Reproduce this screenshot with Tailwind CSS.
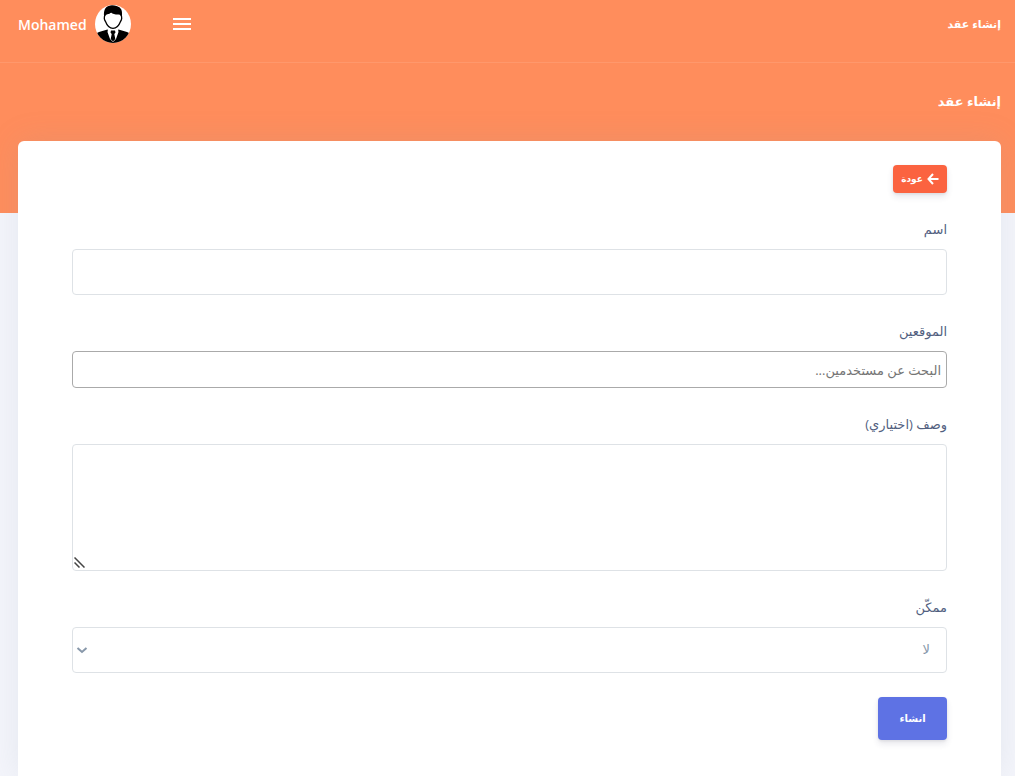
<!DOCTYPE html>
<html lang="ar" dir="rtl">
<head>
  <meta charset="UTF-8" />
  <title>إنشاء عقد</title>
  <meta name="viewport" content="width=device-width, initial-scale=1.0" />
  <script src="https://cdn.jsdelivr.net/npm/@tailwindcss/browser@4"></script>
</head>
<body class="flex min-h-screen flex-col bg-[#f4f5fb] font-['Open_Sans','DejaVu_Sans',sans-serif] text-[#525f7f]">
  <!-- Header -->
  <header class="h-[213px] bg-[#ff8d5c] text-white">
    <nav class="flex h-[63px] items-center justify-between border-b border-white/10 pr-[14px] pl-[18px] pb-3.5">
      <h6 class="text-[11px] font-bold">إنشاء عقد</h6>
      <div class="flex items-center">
        <button type="button" aria-label="القائمة" class="ml-[42px] flex w-[18px] flex-col gap-[3px]">
          <span class="h-0.5 w-full bg-white"></span>
          <span class="h-0.5 w-full bg-white"></span>
          <span class="h-0.5 w-full bg-white"></span>
        </button>
        <a href="#" class="flex items-center gap-2">
          <svg class="h-[38px] w-9" viewBox="0 0 36 38" aria-hidden="true">
            <defs><clipPath id="avatar"><ellipse cx="18" cy="19" rx="18" ry="19" /></clipPath></defs>
            <g clip-path="url(#avatar)">
              <rect width="36" height="38" fill="#fff" />
              <path d="M0 29 4 27 12.500 24.500 18 29 23.500 24.500 32 27 36 29V38H0Z" fill="#000" />
              <path d="M13 24 18 27 23 24 23.500 27 21 34 18 37 15 34 12.500 27Z" fill="#fff" />
              <path d="M16 25.500h4l.5 2-1.200 1.500 1 5-2.300 2.500-2.300-2.500 1-5-1.200-1.500Z" fill="#000" />
              <path d="M10 9.500C9 12 9 14.500 10.500 16.500 12 20.500 15 23.300 18 23.300S24 20.500 25.500 16.500C27 14.500 27 12 26 9.500L18 6Z" fill="#fff" stroke="#000" stroke-width="1.300" />
              <path d="M9.300 13C8 6 10 1.500 15 .5 18-.3 24 .6 26 4c1.500 2.500 1 6 .7 9L25 9.500C21 9.800 18 9.300 16 7.500 14.500 9 12.500 9 11 9.500Z" fill="#000" />
            </g>
          </svg>
          <span class="pt-0.5 text-sm font-semibold">Mohamed</span>
        </a>
      </div>
    </nav>
    <h2 class="pt-[26px] pr-[14px] text-[13px] leading-6 font-bold">إنشاء عقد</h2>
  </header>

  <!-- Form card -->
  <main class="-mt-[72px] flex flex-1 flex-col pr-[14px] pl-[18px]">
    <div class="flex-1 rounded-t-md bg-white px-[54px] pt-6 pb-6 shadow-[0_0_32px_0_rgba(136,152,170,0.15)]">
      <a href="#" class="flex h-7 w-[54px] items-center justify-center gap-1 rounded bg-[#fb6340] text-[9px] font-bold text-white shadow-[0_4px_6px_rgba(50,50,93,0.11),0_1px_3px_rgba(0,0,0,0.08)]">
        <svg class="size-3" viewBox="0 0 12 12" fill="none" stroke="currentColor" stroke-width="2" aria-hidden="true"><path d="M6 1 1.500 6 6 11M1.500 6H11.500" /></svg>
        عودة
      </a>

      <form class="mt-6 space-y-6">
        <div>
          <label for="name" class="mb-2 block text-[13px] leading-6">اسم</label>
          <input type="text" id="name" class="block h-[46px] w-full rounded border border-[#dee2e6] px-3 text-[13px]" />
        </div>
        <div>
          <label for="signers" class="mb-2 block text-[13px] leading-6">الموقعين</label>
          <input type="search" id="signers" placeholder="البحث عن مستخدمين..." class="block h-[37px] w-full rounded border border-[#aaa] px-[5px] text-[13px] placeholder:text-[#757575]" />
        </div>
        <div>
          <label for="description" class="mb-2 block text-[13px] leading-6">وصف (اختياري)</label>
          <div class="relative">
            <textarea id="description" class="block h-[127px] w-full resize-y rounded border border-[#dee2e6] px-3 py-2 text-[13px] [&::-webkit-resizer]:bg-transparent"></textarea>
            <svg class="pointer-events-none absolute bottom-[3px] left-0.5 size-[11px]" viewBox="0 0 11 11" fill="none" stroke="#444" stroke-width="1.500" aria-hidden="true"><path d="M.5 .5 10.500 10.500M.5 5.500 5.500 10.500" /></svg>
          </div>
        </div>
        <div>
          <label for="enabled" class="mb-2 block text-[13px] leading-6">ممكّن</label>
          <div class="relative">
            <select id="enabled" class="block h-[46px] w-full appearance-none rounded border border-[#dee2e6] bg-white px-4 text-[13px] text-[#8898aa]">
              <option>لا</option>
              <option>نعم</option>
            </select>
            <svg class="pointer-events-none absolute top-5 left-1 h-2 w-3" viewBox="0 0 12 8" fill="none" stroke="#8898aa" stroke-width="2" aria-hidden="true"><path d="M1.500 1 6 5 10.500 1" /></svg>
          </div>
        </div>
        <button type="submit" class="h-[43px] w-[69px] rounded bg-[#5e72e4] text-[10px] font-bold text-white shadow-[0_4px_6px_rgba(50,50,93,0.11),0_1px_3px_rgba(0,0,0,0.08)]">انشاء</button>
      </form>
    </div>
  </main>
</body>
</html>
